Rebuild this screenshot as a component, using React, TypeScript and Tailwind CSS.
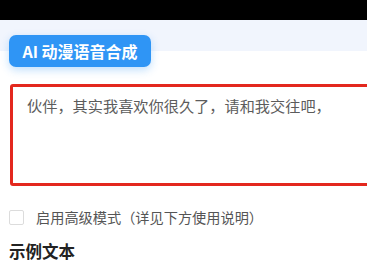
const App = () => {
  return (
    <div className="min-h-[269px] w-[367px] overflow-hidden bg-white font-['Noto_Sans_CJK_SC','Noto_Sans',sans-serif]">
      {/* status strip */}
      <div className="h-[20px] bg-black" />

      {/* title */}
      <div className="bg-[linear-gradient(to_bottom,#f1f5fd_31px,#ffffff_31px)] pl-[9px] pt-[15px]">
        <div className="flex h-[32px] w-[142px] items-center justify-center rounded-[7px] bg-[#2f95f5] text-[16px] font-bold text-white shadow-[0_3px_8px_rgba(47,149,245,0.3)]">
          AI 动漫语音合成
        </div>
      </div>

      {/* input */}
      <div className="ml-[10px] mt-[17px] h-[102px] w-[380px] rounded-[3px] border-[3px] border-[#e3281e] pl-[14px] pt-[5px]">
        <p className="text-[15.2px] leading-[26px] text-[#5c5c5c]">
          伙伴，其实我喜欢你很久了，请和我交往吧，
        </p>
      </div>

      {/* advanced mode */}
      <label className="mt-[22px] flex items-center pl-[9px]">
        <span className="h-[15px] w-[15px] rounded-[2px] border border-[#dcdcdc] bg-white" />
        <span className="ml-[12px] text-[14.2px] leading-[18px] text-[#555]">
          启用高级模式（详见下方使用说明）
        </span>
      </label>

      <h3 className="mt-[15px] pl-[9px] text-[16.5px] font-semibold leading-[20px] text-[#222]">
        示例文本
      </h3>
    </div>
  );
};

export default App;
